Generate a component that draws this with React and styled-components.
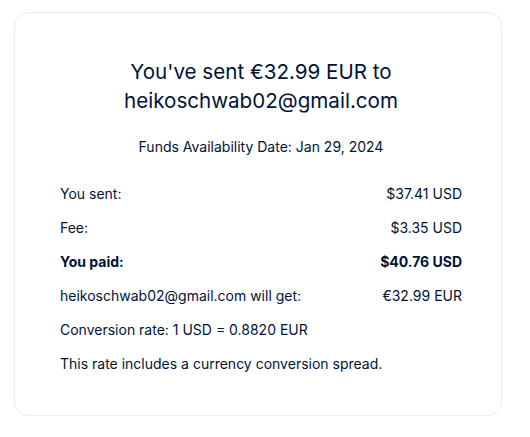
import React from 'react'
import styled, { createGlobalStyle } from 'styled-components'

const Global = createGlobalStyle`
    body {
        margin: 0;
        background: #fff;
        font-family: Inter, "Noto Sans", sans-serif;
        color: #001435;
    }
`

const Page = styled.div`
    padding: 12px 28px 20px 14px;
`

const Card = styled.div`
    width: 488px;
    height: 404px;
    box-sizing: border-box;
    border: 1px solid #ececec;
    border-radius: 14px;
    padding: 44px 39px 0 45px;
`

const Title = styled.h1`
    margin: 0;
    font-size: 20.6px;
    font-weight: 400;
    line-height: 29px;
    text-align: center;
`

const Funds = styled.p`
    margin: 22px 0 27px;
    font-size: 14px;
    line-height: 20px;
    text-align: center;
`

const Rows = styled.div`
    display: flex;
    flex-direction: column;
    gap: 14px;
`

const Row = styled.div`
    display: flex;
    justify-content: space-between;
    font-size: 14px;
    line-height: 20px;
    font-weight: ${p => (p.bold ? 700 : 400)};
`

const Note = styled.div`
    font-size: 14px;
    line-height: 20px;
`

const rows = [
    ['You sent:', '$37.41 USD'],
    ['Fee:', '$3.35 USD'],
    ['You paid:', '$40.76 USD', true],
    ['heikoschwab02@gmail.com will get:', '€32.99 EUR'],
]

export default () => (
    <Page>
        <Global />
        <Card>
            <Title>
                You've sent €32.99 EUR to
                <br />
                heikoschwab02@gmail.com
            </Title>
            <Funds>Funds Availability Date: Jan 29, 2024</Funds>
            <Rows>
                {rows.map(([label, value, bold]) => (
                    <Row key={label} bold={bold}>
                        <span>{label}</span>
                        <span>{value}</span>
                    </Row>
                ))}
                <Note>Conversion rate: 1 USD = 0.8820 EUR</Note>
                <Note>This rate includes a currency conversion spread.</Note>
            </Rows>
        </Card>
    </Page>
)
